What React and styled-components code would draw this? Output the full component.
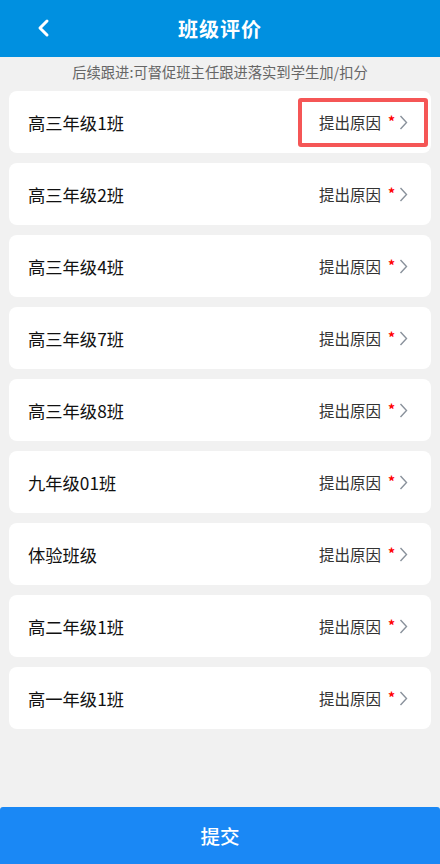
import styled, { createGlobalStyle, css } from "styled-components";

const GlobalStyle = createGlobalStyle`
  html, body {
    margin: 0;
    padding: 0;
    background: #f1f1f1;
    font-family: "Noto Sans CJK SC", "Noto Sans", sans-serif;
  }
`;

const Page = styled.div`
  min-height: 100vh;
  display: flex;
  flex-direction: column;
  background: #f1f1f1;
`;

const Header = styled.div`
  height: 57px;
  background: #0090e0;
  position: relative;
  display: flex;
  align-items: center;
  justify-content: center;
`;

const BackButton = styled.div`
  position: absolute;
  left: 34px;
  top: 18px;
  width: 20px;
  height: 20px;
  cursor: pointer;
`;

const Title = styled.div`
  color: #fff;
  font-size: 20px;
  font-weight: bold;
  letter-spacing: 1px;
`;

const Notice = styled.div`
  text-align: center;
  color: #666;
  font-size: 14.3px;
  height: 34px;
  line-height: 30px;
`;

const List = styled.div`
  flex: 1;
  display: flex;
  flex-direction: column;
  gap: 10px;
  padding: 0 9px;
`;

const Card = styled.div`
  height: 62px;
  background: #fff;
  border-radius: 8px;
  display: flex;
  align-items: center;
  justify-content: space-between;
  padding: 0 19px;
  box-sizing: border-box;
`;

const ClassName = styled.div`
  font-size: 17.3px;
  color: #111;
`;

const Action = styled.div`
  display: flex;
  align-items: center;
  font-size: 15.5px;
  color: #333;
  cursor: pointer;
  margin-right: -16px;
  padding: 0 16px 0 17px;
  height: 49px;
  border: 4px solid transparent;
  border-radius: 3px;
  box-sizing: border-box;

  ${props =>
    props.highlighted &&
    css`
      border-color: #f55656;
    `}
`;

const Required = styled.span`
  color: #f00;
  font-size: 14px;
  font-weight: bold;
  margin: 0 4px 0 7px;
  position: relative;
  top: -1px;
`;

const Footer = styled.div`
  height: 57px;
  margin-top: 20px;
  background: #1a88f5;
  border-radius: 3px 3px 0 0;
  display: flex;
  align-items: center;
  justify-content: center;
  color: #fff;
  font-size: 19.5px;
  font-weight: 500;
  cursor: pointer;
`;

const classes = [
  "高三年级1班",
  "高三年级2班",
  "高三年级4班",
  "高三年级7班",
  "高三年级8班",
  "九年级01班",
  "体验班级",
  "高二年级1班",
  "高一年级1班",
];

function App() {
  return (
    <>
      <GlobalStyle />
      <Page>
        <Header>
          <BackButton>
            <svg width="20" height="20" viewBox="0 0 20 20">
              <path d="M13 3 L6 10 L13 17" fill="none" stroke="#fff" strokeWidth="3" strokeLinecap="round" strokeLinejoin="round" />
            </svg>
          </BackButton>
          <Title>班级评价</Title>
        </Header>
        <Notice>后续跟进:可督促班主任跟进落实到学生加/扣分</Notice>
        <List>
          {classes.map((name, i) => (
            <Card key={name}>
              <ClassName>{name}</ClassName>
              <Action highlighted={i === 0}>
                提出原因
                <Required>*</Required>
                <svg width="9" height="15" viewBox="0 0 9 15">
                  <path d="M1.5 1 L7.5 7.5 L1.5 14" fill="none" stroke="#8a929c" strokeWidth="1.4" />
                </svg>
              </Action>
            </Card>
          ))}
        </List>
        <Footer>提交</Footer>
      </Page>
    </>
  );
}

export default App;
